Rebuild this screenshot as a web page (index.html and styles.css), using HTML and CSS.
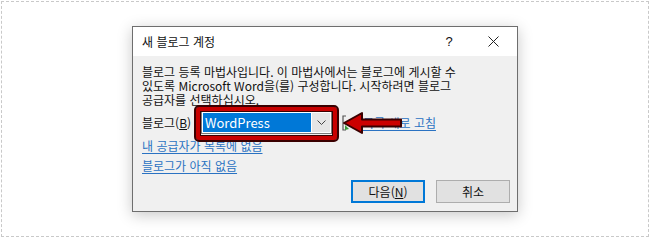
FILE: index.html
```html
<!DOCTYPE html>
<html lang="ko">
<head>
<meta charset="utf-8">
<link rel="stylesheet" href="styles.css">
</head>
<body>
<div class="frame">
  <div class="dialog">
    <div class="titlebar">
      <span class="title">새 블로그 계정</span>
      <span class="help">?</span>
      <span class="close"><svg width="11" height="11" viewBox="0 0 11 11"><path d="M0.5 0.5 L10.5 10.5 M10.5 0.5 L0.5 10.5" stroke="#222" stroke-width="1" fill="none"/></svg></span>
    </div>
    <div class="body">
      <p class="intro">블로그 등록 마법사입니다. 이 마법사에서는 블로그에 게시할 수<br>있도록 Microsoft Word을(를) 구성합니다. 시작하려면 블로그<br>공급자를 선택하십시오.</p>
      <div class="blogrow">
        <span class="label">블로그(<u>B</u>)</span>
        <div class="combo">
          <span class="sel">WordPress</span>
          <span class="drop"><svg width="9" height="5" viewBox="0 0 9 5"><path d="M0.5 0.5 L4.5 4.5 L8.5 0.5" stroke="#444" stroke-width="1" fill="none"/></svg></span>
        </div>
        <span class="refresh">
          <svg class="ricon" width="9" height="16" viewBox="0 0 9 16"><path d="M4 1 H1 V15 H4" stroke="#555" stroke-width="1.2" fill="none"/><path d="M3 10 L7 14 L3 15 Z" fill="#3a9a3a"/></svg>
          <a class="link rlink">목록 새로 고침</a>
        </span>
        <div class="highlight"></div>
        <svg class="arrow" width="62" height="24" viewBox="0 0 62 24"><path d="M2 12 L20 2 L20 8.5 L59 8.5 L59 15.5 L20 15.5 L20 22 Z" fill="#cc0000" stroke="#3a0000" stroke-width="2" stroke-linejoin="round"/></svg>
      </div>
      <a class="link l1">내 공급자가 목록에 없음</a>
      <a class="link l2">블로그가 아직 없음</a>
      <div class="buttons">
        <button class="btn primary">다음(<u>N</u>)</button>
        <button class="btn">취소</button>
      </div>
    </div>
  </div>
</div>
</body>
</html>
```

FILE: styles.css
```css
* { box-sizing: border-box; }
html, body { margin: 0; padding: 0; background: #fff; }
body { width: 650px; height: 238px; overflow: hidden; font-family: "Noto Sans CJK KR", "Noto Sans", sans-serif; font-size: 12px; color: #111; }
.frame {
  margin: 1px;
  width: 648px;
  height: 236px;
  border: 1px dashed #c9c9c9;
  display: flex;
  align-items: center;
  justify-content: center;
}
.dialog {
  width: 386px;
  height: 186px;
  border: 1px solid #6e6e6e;
  background: #f0f0f0;
  box-shadow: 0 3px 14px rgba(0,0,0,0.22);
  display: flex;
  flex-direction: column;
}
.titlebar {
  height: 29px;
  background: #fff;
  display: flex;
  align-items: center;
  padding-left: 9px;
  flex-shrink: 0;
}
.title { flex: 1; font-size: 12px; line-height: 14px; }
.help { width: 12px; text-align: center; margin-right: 33px; font-family: "Liberation Sans", sans-serif; font-size: 13px; }
.close { width: 11px; height: 11px; margin-right: 18px; display: flex; }
.body { padding: 9px 7px 8px 9px; display: flex; flex-direction: column; flex: 1; }
.intro { margin: 0; line-height: 14px; white-space: nowrap; }
.blogrow { margin-top: 4px; height: 23px; display: flex; align-items: center; position: relative; }
.label { width: 59px; }
.combo {
  width: 131px;
  height: 23px;
  border: 1px solid #7a7a7a;
  background: #fff;
  display: flex;
  padding: 1px;
}
.sel {
  width: 108px;
  background: #0078d7;
  color: #fff;
  font-size: 13px;
  line-height: 19px;
  padding-left: 2px;
}
.drop { flex: 1; background: #e5e5e5; display: flex; align-items: center; justify-content: center; margin-left: 1px; }
.refresh { display: flex; align-items: center; margin-left: 10px; }
.ricon { margin-right: 12px; }
.link { color: #2a72c2; text-decoration: underline; text-underline-offset: 2px; line-height: 14px; }
.highlight {
  position: absolute;
  left: 52px;
  top: -6px;
  width: 145px;
  height: 37px;
  border: 2px solid #3a0000;
  border-radius: 5px;
  box-shadow: inset 0 0 0 4px #c80000, inset 0 0 0 5px #3a0000;
}
.arrow { position: absolute; left: 200px; top: 0px; }
.l1 { margin-top: 5px; align-self: flex-start; }
.l2 { margin-top: 6px; align-self: flex-start; }
.buttons { margin-top: auto; display: flex; justify-content: flex-end; gap: 11px; }
.btn {
  width: 74px;
  height: 23px;
  border: 1px solid #adadad;
  background: #e1e1e1;
  font-family: "Noto Sans CJK KR", sans-serif;
  font-size: 12px;
  color: #111;
  padding: 0;
}
.btn.primary { border: 2px solid #0078d7; }
```
